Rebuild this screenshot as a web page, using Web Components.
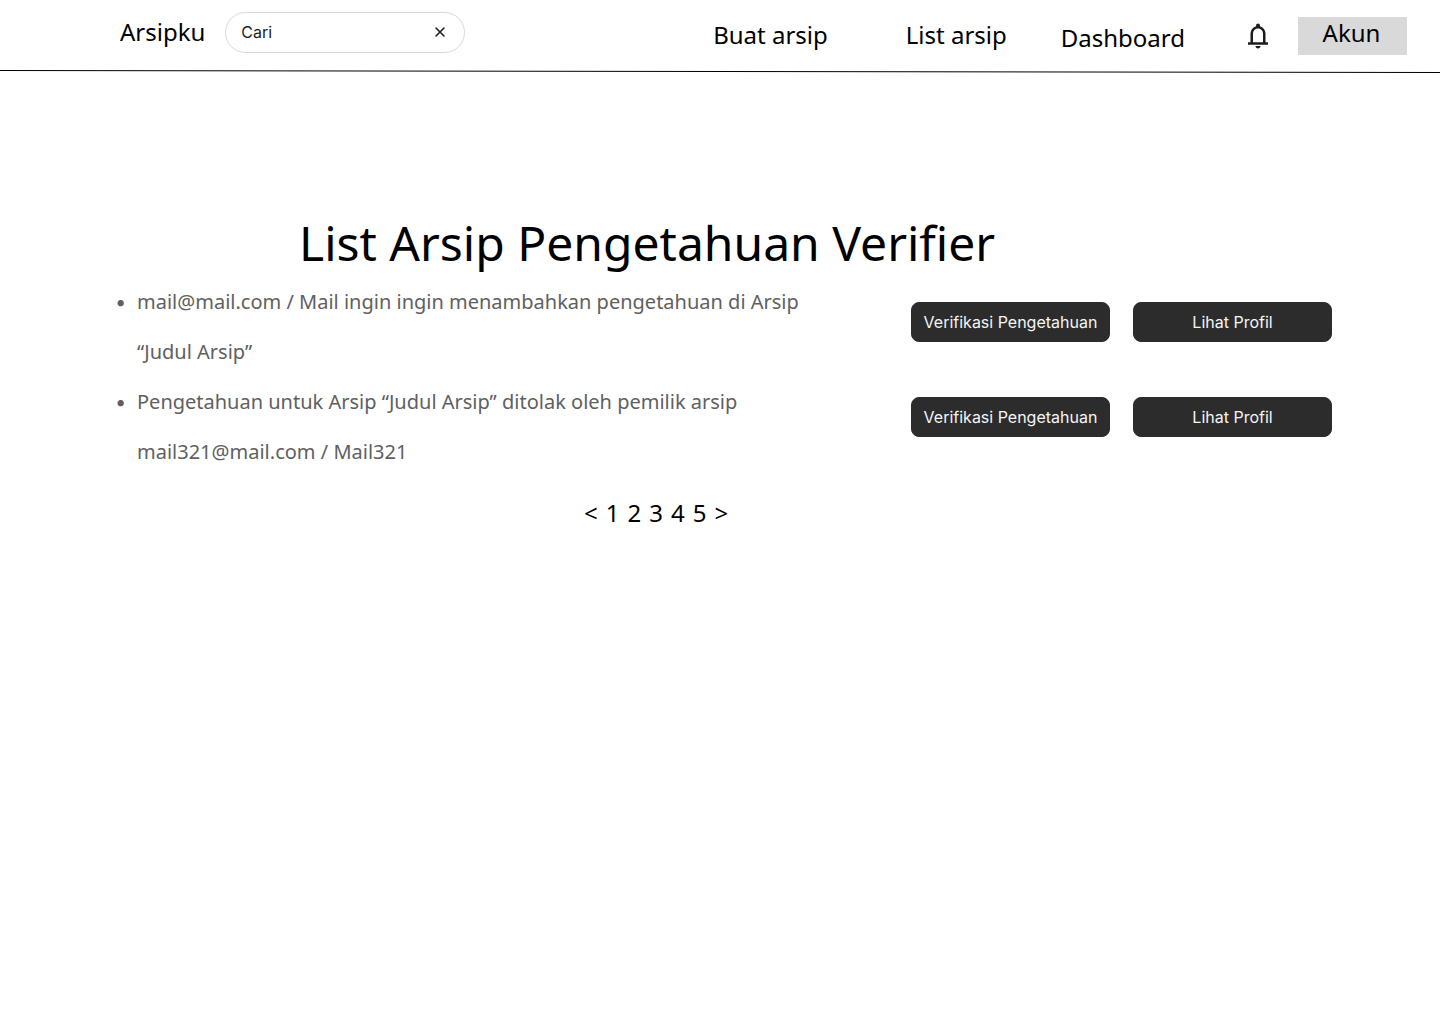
<!DOCTYPE html>
<html lang="id">
<head>
<meta charset="utf-8">
<meta name="viewport" content="width=device-width, initial-scale=1">
<title>Arsipku</title>
<style>
  body { margin: 0; background: #fff; color: #000; font-family: "Noto Sans", sans-serif; }
</style>
</head>
<body>
<arsip-app></arsip-app>

<script>
const define = (name, html) => {
  const template = document.createElement("template");
  template.innerHTML = html;
  customElements.define(name, class extends HTMLElement {
    constructor() {
      super();
      this.attachShadow({ mode: "open" }).append(template.content.cloneNode(true));
    }
  });
};

define("nav-link", `
  <style>
    :host { display: block; font-size: 24px; line-height: 30px; white-space: nowrap; }
    a { color: inherit; text-decoration: none; }
  </style>
  <a href="#"><slot></slot></a>`);

define("search-box", `
  <style>
    :host { display: block; }
    form { display: flex; align-items: center; gap: 8px; box-sizing: border-box; width: 240px; height: 41px;
      padding: 0 16px 0 15px; border: 1px solid #d9d9d9; border-radius: 21px; background: #fff; }
    input { flex: 1; min-width: 0; padding: 0; border: 0; outline: 0; background: none;
      color: #1e1e1e; font: 16px/24px Inter, sans-serif; }
    button { display: flex; padding: 0; border: 0; background: none; color: #1e1e1e; }
  </style>
  <form>
    <input type="text" aria-label="Cari" value="Cari">
    <button type="reset" aria-label="Hapus">
      <svg width="16" height="16" viewBox="0 0 16 16" fill="none" stroke="currentColor" stroke-width="1.6" stroke-linecap="round" stroke-linejoin="round"><path d="M12 4 4 12M4 4l8 8"/></svg>
    </button>
  </form>`);

define("bell-button", `
  <style>
    :host { display: block; }
    button { display: flex; padding: 0; border: 0; background: none; color: #1d1b20; }
  </style>
  <button type="button" aria-label="Notifikasi">
    <svg width="30" height="30" viewBox="0 0 24 24" fill="currentColor"><path d="M4 19v-2h2v-7q0-2.08 1.25-3.69T10.5 4.2v-.7q0-.62.44-1.06T12 2t1.06.44.44 1.06v.7q2 .5 3.25 2.11T18 10v7h2v2zm8 3q-.82 0-1.41-.59T10 20h4q0 .82-.59 1.41T12 22m-4-5h8v-7q0-1.65-1.17-2.83T12 6 9.17 7.17 8 10z"/></svg>
  </button>`);

define("account-button", `
  <style>
    :host { display: block; }
    button { width: 109px; height: 38px; padding: 0 2px 6px 0; border: 0; background: #d9d9d9;
      color: #000; font: inherit; font-size: 24px; line-height: 32px; }
  </style>
  <button type="button"><slot></slot></button>`);

define("site-header", `
  <style>
    :host { display: block; }
    header { display: flex; align-items: center; justify-content: space-between; height: 70px; box-sizing: border-box;
      padding: 0 33px 0 120px; }
    .brand { display: flex; align-items: center; gap: 20px; padding-bottom: 6px; }
    nav { display: flex; align-items: center; height: 38px; padding-top: 2px; }
    nav nav-link { padding-bottom: 2px; }
    .buat { margin-right: 78px; }
    .list { margin-right: 54px; }
    .dash { align-self: end; margin-right: 58px; }
    bell-button { margin-right: 25px; }
    .rule { display: block; width: 100%; height: 3px; }
  </style>
  <header>
    <div class="brand"><nav-link>Arsipku</nav-link><search-box></search-box></div>
    <nav>
      <nav-link class="buat">Buat arsip</nav-link>
      <nav-link class="list">List arsip</nav-link>
      <nav-link class="dash">Dashboard</nav-link>
      <bell-button></bell-button>
      <account-button>Akun</account-button>
    </nav>
  </header>
  <svg class="rule" viewBox="0 0 1440 3" preserveAspectRatio="none"><path d="M0 .5 1440 2.5" stroke="#000"/></svg>`);

define("action-button", `
  <style>
    :host { display: block; flex: 1; }
    button { width: 100%; height: 40px; padding: 0 8px; border: 1px solid #2c2c2c; border-radius: 8px;
      background: #2c2c2c; color: #f5f5f5; font: 16px/16px Inter, sans-serif; white-space: nowrap; }
  </style>
  <button type="button"><slot></slot></button>`);

define("action-row", `
  <style>:host { display: flex; gap: 23px; }</style>
  <action-button>Verifikasi Pengetahuan</action-button>
  <action-button>Lihat Profil</action-button>`);

define("knowledge-list", `
  <style>
    :host { display: block; color: #5f5f5f; font-size: 20px; line-height: 50px; }
    ul { margin: 0; padding: 0 0 0 17px; list-style-type: "•\\00a0\\00a0"; }
    li::marker { font-family: Inter, sans-serif; }
  </style>
  <ul>
    <li>mail@mail.com / Mail ingin ingin menambahkan pengetahuan di Arsip “Judul Arsip”</li>
    <li>Pengetahuan untuk Arsip “Judul Arsip” ditolak oleh pemilik arsip mail321@mail.com / Mail321</li>
  </ul>`);

define("page-numbers", `
  <style>
    :host { display: block; font-size: 24px; line-height: 30px; }
    nav { display: flex; gap: 8px; }
    a { color: inherit; text-decoration: none; }
  </style>
  <nav aria-label="Halaman">
    <a href="#">&lt;</a><a href="#">1</a><a href="#">2</a><a href="#">3</a><a href="#">4</a><a href="#">5</a><a href="#">&gt;</a>
  </nav>`);

define("arsip-app", `
  <style>
    :host { display: block; }
    main { padding: 140px 108px 40px 120px; }
    h1 { margin: 0; padding-left: 179px; font-size: 48px; line-height: 60px; font-weight: 400; }
    .content { display: grid; grid-template-columns: minmax(0, 1fr) 421px; column-gap: 60px; margin-top: 4px; }
    .actions { display: flex; flex-direction: column; gap: 55px; padding-top: 25px; }
    page-numbers { padding: 21px 0 0 464px; }
  </style>
  <site-header></site-header>
  <main>
    <h1>List Arsip Pengetahuan Verifier</h1>
    <div class="content">
      <knowledge-list></knowledge-list>
      <div class="actions"><action-row></action-row><action-row></action-row></div>
    </div>
    <page-numbers></page-numbers>
  </main>`);
</script>
</body>
</html>
